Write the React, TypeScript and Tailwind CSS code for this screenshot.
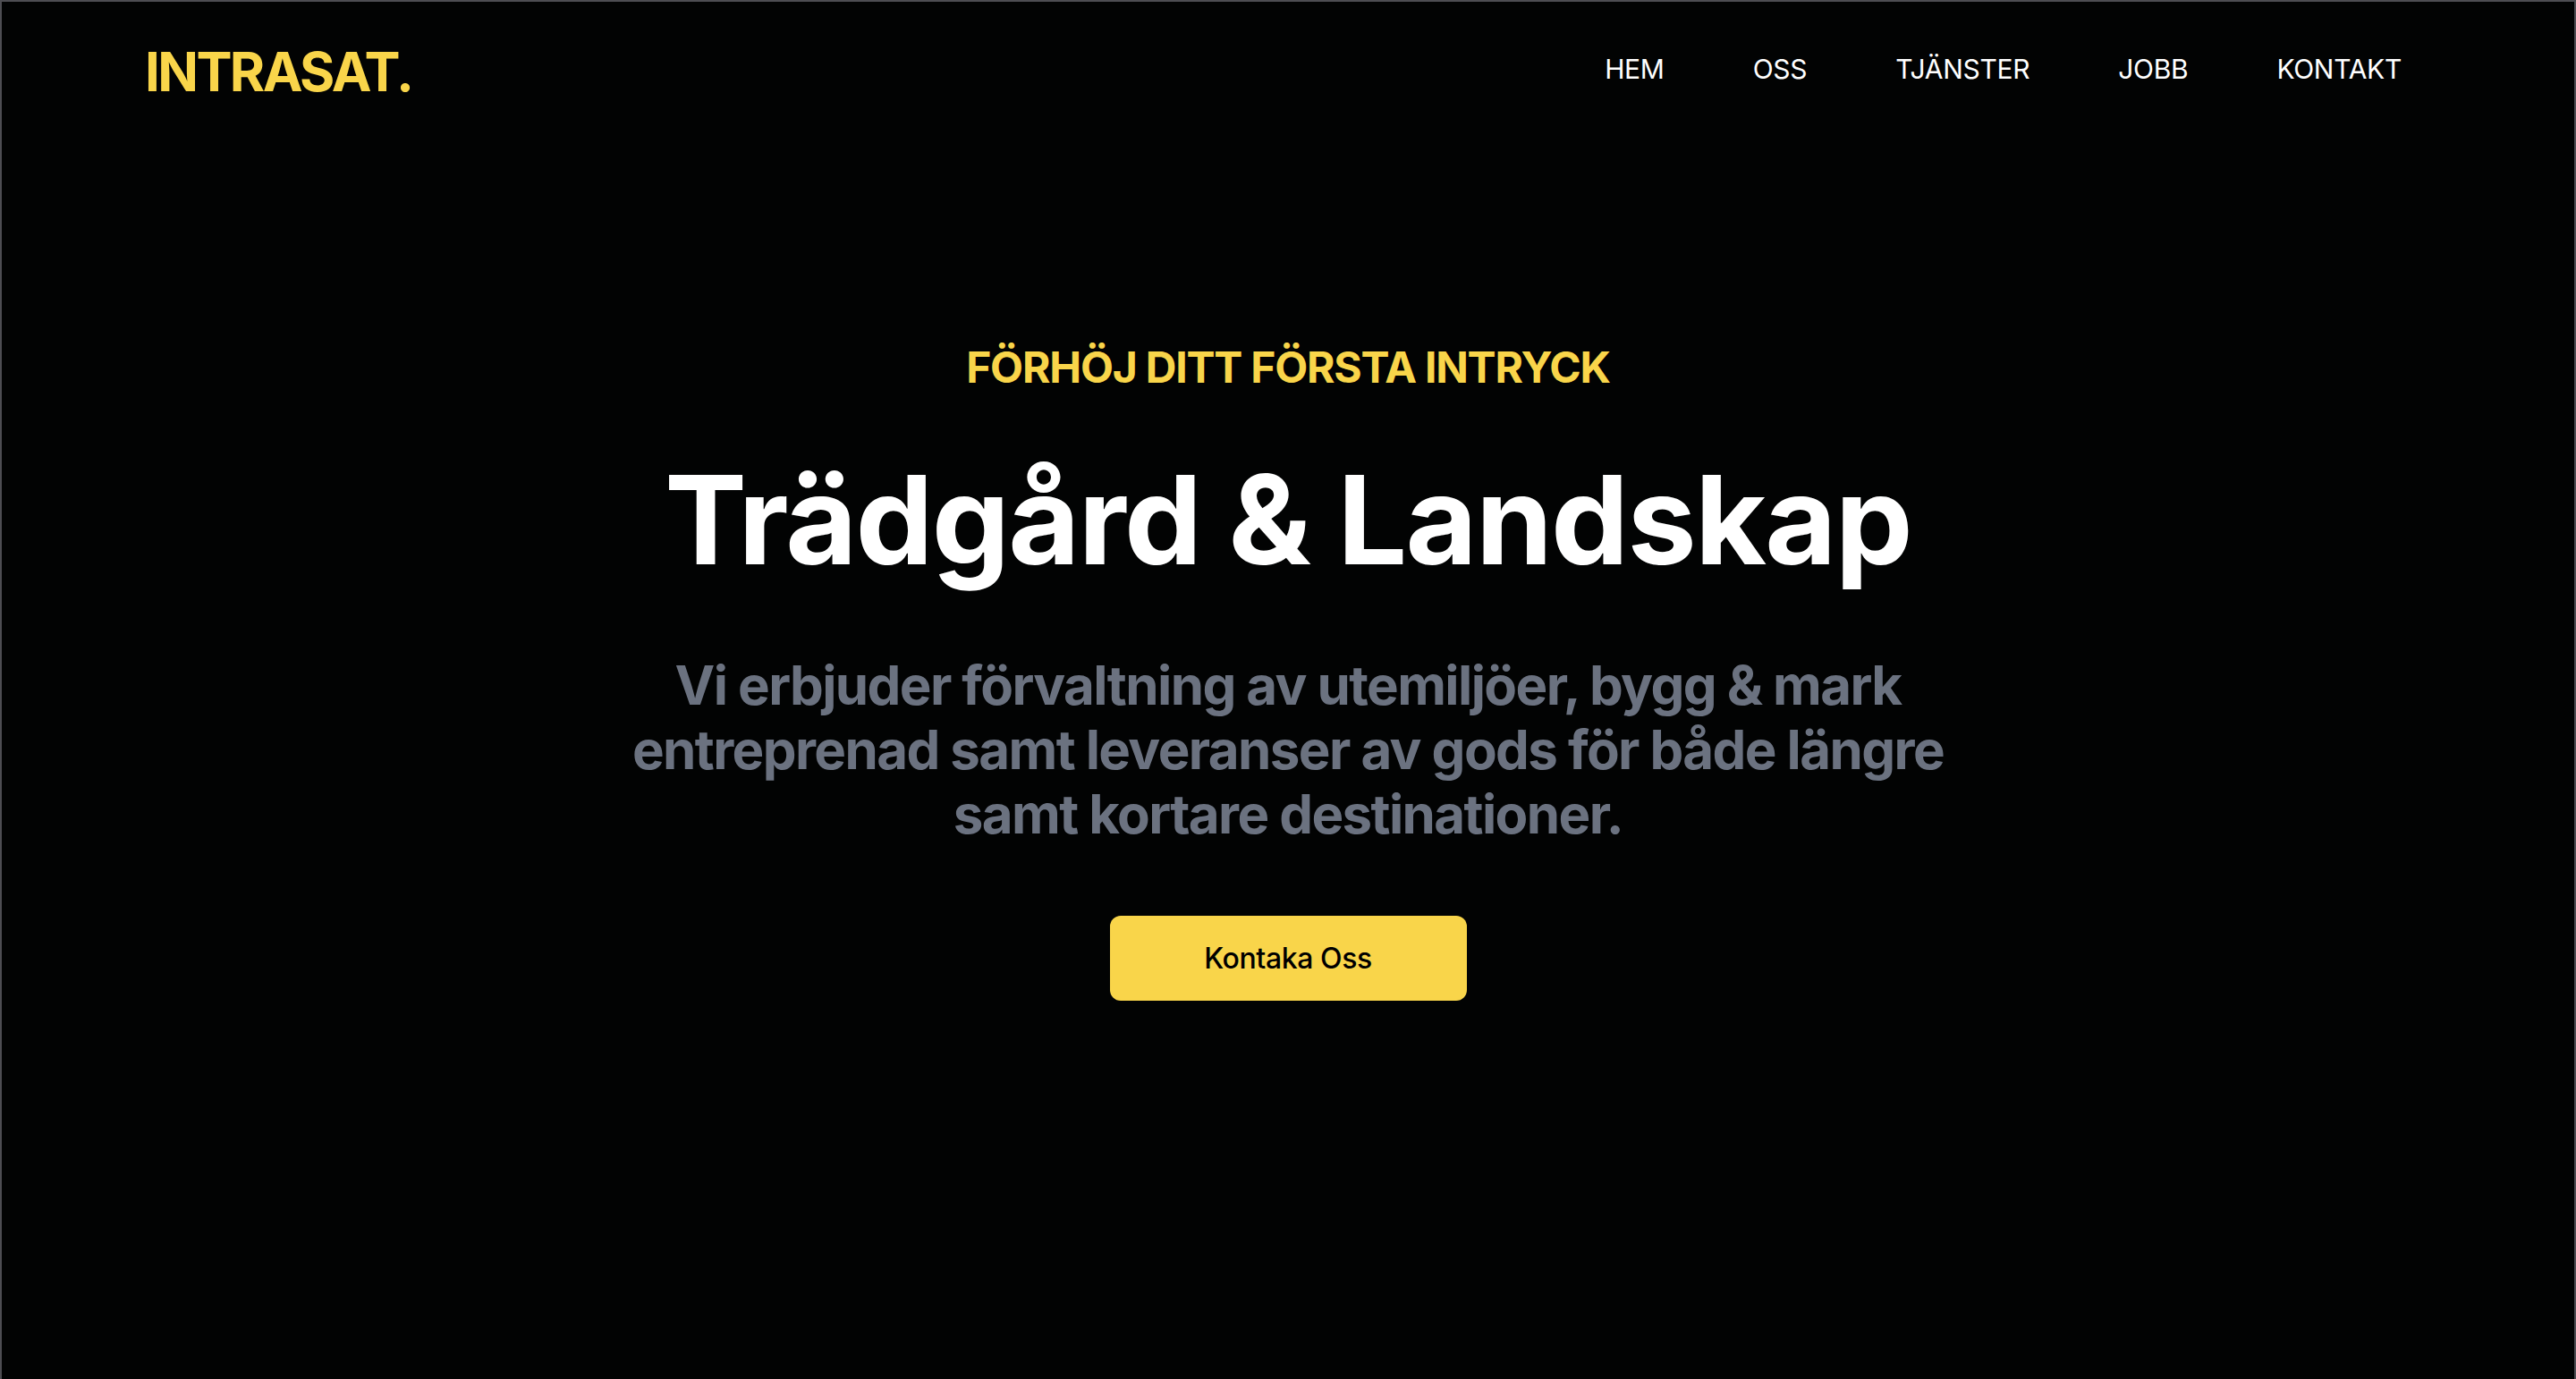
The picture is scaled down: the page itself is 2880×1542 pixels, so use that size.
const navItems = ["HEM", "OSS", "TJÄNSTER", "JOBB", "KONTAKT"];

const Header = () => {
  return (
    <header className="h-[156px] pl-[160px] pr-[193px] flex items-center justify-between">
      <a className="text-[60px] leading-none font-bold text-[#f9d54a] tracking-[-2.6px]">
        INTRASAT.
      </a>
      <nav className="flex items-center gap-[99px] -mt-[6px]">
        {navItems.map((item) => (
          <a
            key={item}
            className="text-[30px] leading-none text-white font-normal tracking-[-0.3px] cursor-pointer"
          >
            {item}
          </a>
        ))}
      </nav>
    </header>
  );
};

const Hero = () => {
  return (
    <section className="pt-[229px] flex flex-col items-center text-center">
      <p className="text-[48px] leading-[48px] font-bold text-[#f9d54a] tracking-[-1.2px]">
        FÖRHÖJ DITT FÖRSTA INTRYCK
      </p>
      <h1 className="mt-[77px] text-[138px] leading-none font-bold text-white tracking-[-1.7px]">
        Trädgård &amp; Landskap
      </h1>
      <p className="mt-[80px] max-w-[1536px] text-[60px] leading-[72px] font-bold text-[#6b7280] tracking-[-1.6px]">
        Vi erbjuder förvaltning av utemiljöer, bygg &amp; mark entreprenad samt
        leveranser av gods för både längre samt kortare destinationer.
      </p>
      <button className="mt-[78px] w-[399px] h-[95px] rounded-[12px] bg-[#f9d54a] text-[32px] font-medium text-black tracking-[-0.4px]">
        Kontaka Oss
      </button>
    </section>
  );
};

export default function App() {
  return (
    <div
      className="min-h-[1542px] bg-[#020303] border-t-2 border-x-2 border-[#4d4d52]"
      style={{ fontFamily: "Inter, 'Noto Sans', sans-serif" }}
    >
      <Header />
      <Hero />
    </div>
  );
}
